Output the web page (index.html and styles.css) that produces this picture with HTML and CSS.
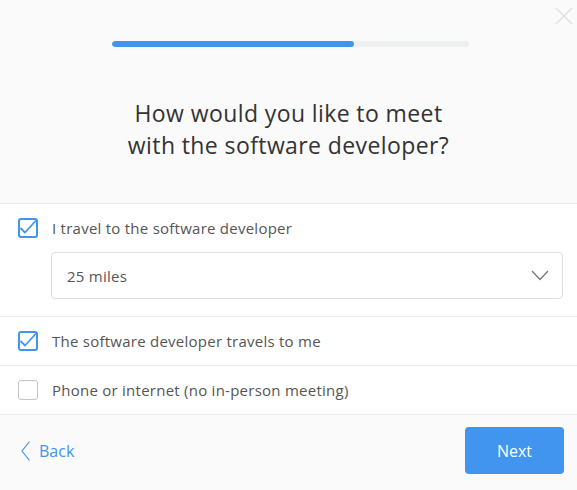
FILE: index.html
```html
<!DOCTYPE html>
<html>
<head>
<meta charset="utf-8">
<link rel="stylesheet" href="styles.css">
</head>
<body>
<div class="modal">
  <header class="head">
    <button class="close" aria-label="Close">
      <svg width="18" height="18" viewBox="0 0 18 18"><path d="M1 1L17 17M17 1L1 17" stroke="#e2e2e2" stroke-width="1.6" fill="none"/></svg>
    </button>
    <div class="progress"><div class="progress-fill"></div></div>
    <h1 class="title">How would you like to meet<br>with the software developer?</h1>
  </header>
  <main class="options">
    <div class="row first">
      <label class="opt">
        <span class="box checked">
          <svg width="20" height="20" viewBox="0 0 20 20"><path d="M2.5 10L7 14.5L18 2.5" stroke="#4195ef" stroke-width="1.8" fill="none" stroke-linejoin="round"/></svg>
        </span>
        <span class="label">I travel to the software developer</span>
      </label>
      <div class="select">
        <span>25 miles</span>
        <svg width="18" height="11" viewBox="0 0 18 11"><path d="M1 1L9 9.5L17 1" stroke="#777" stroke-width="1.3" fill="none"/></svg>
      </div>
    </div>
    <div class="row">
      <label class="opt">
        <span class="box checked">
          <svg width="20" height="20" viewBox="0 0 20 20"><path d="M2.5 10L7 14.5L18 2.5" stroke="#4195ef" stroke-width="1.8" fill="none" stroke-linejoin="round"/></svg>
        </span>
        <span class="label">The software developer travels to me</span>
      </label>
    </div>
    <div class="row">
      <label class="opt">
        <span class="box"></span>
        <span class="label">Phone or internet (no in-person meeting)</span>
      </label>
    </div>
  </main>
  <footer class="foot">
    <a class="back">
      <svg width="9" height="20" viewBox="0 0 9 20"><path d="M8.5 0.5L1 10L8.5 19.5" stroke="#4195ef" stroke-width="1.2" fill="none"/></svg>
      <span>Back</span>
    </a>
    <button class="next">Next</button>
  </footer>
</div>
</body>
</html>
```

FILE: styles.css
```css
* { box-sizing: border-box; }
html, body { margin: 0; padding: 0; }
body {
  width: 577px;
  height: 490px;
  font-family: "Open Sans", Lato, sans-serif;
  background: #fff;
  overflow: hidden;
}
.modal {
  display: flex;
  flex-direction: column;
  height: 490px;
}
.head {
  position: relative;
  background: #fafafa;
  border-bottom: 1px solid #ebebeb;
  height: 204px;
  padding-top: 41px;
}
.close {
  position: absolute;
  top: 7px;
  right: 4px;
  border: 0;
  padding: 0;
  background: none;
  width: 18px;
  height: 18px;
}
.close svg { display: block; }
.progress {
  margin-left: 112px;
  width: 357px;
  height: 6px;
  border-radius: 3px;
  background: #eeefef;
  overflow: hidden;
}
.progress-fill {
  width: 242px;
  height: 100%;
  border-radius: 3px;
  background: #4195ef;
}
.title {
  margin: 50px 0 0;
  text-align: center;
  font-size: 23px;
  line-height: 32px;
  font-weight: 400;
  color: #333;
  letter-spacing: 0.4px;
}
.options {
  flex: 1;
  background: #fff;
}
.row {
  padding: 14px 14px 14px 18px;
  border-bottom: 1px solid #ebebeb;
}
.row.first { padding-bottom: 17px; }
.opt {
  display: flex;
  align-items: center;
  gap: 14px;
  height: 20px;
}
.box {
  width: 20px;
  height: 20px;
  border: 1px solid #c4c4c4;
  border-radius: 3px;
  background: #fff;
  position: relative;
  flex: none;
}
.box.checked {
  border: 2px solid #4195ef;
}
.box svg {
  position: absolute;
  left: -2px;
  top: -2px;
}
.label {
  font-size: 15px;
  color: #555;
  letter-spacing: 0.25px;
}
.select {
  margin: 14px 0 0 33px;
  height: 47px;
  border: 1px solid #dedede;
  border-radius: 4px;
  display: flex;
  align-items: center;
  justify-content: space-between;
  padding: 0 13px 0 15px;
  font-size: 15px;
  color: #555;
  letter-spacing: 0.25px;
}
.select svg { display: block; }
.foot {
  height: 75px;
  background: #fafafa;
  display: flex;
  align-items: flex-start;
  justify-content: space-between;
  padding: 12px 13px 0 21px;
}
.back {
  display: flex;
  align-items: center;
  gap: 9px;
  height: 47px;
  color: #4195ef;
  font-size: 16px;
}
.back svg { display: block; }
.next {
  width: 99px;
  height: 47px;
  border: 0;
  border-radius: 4px;
  background: #4195ef;
  color: #fff;
  font-family: inherit;
  font-size: 16px;
}
```
